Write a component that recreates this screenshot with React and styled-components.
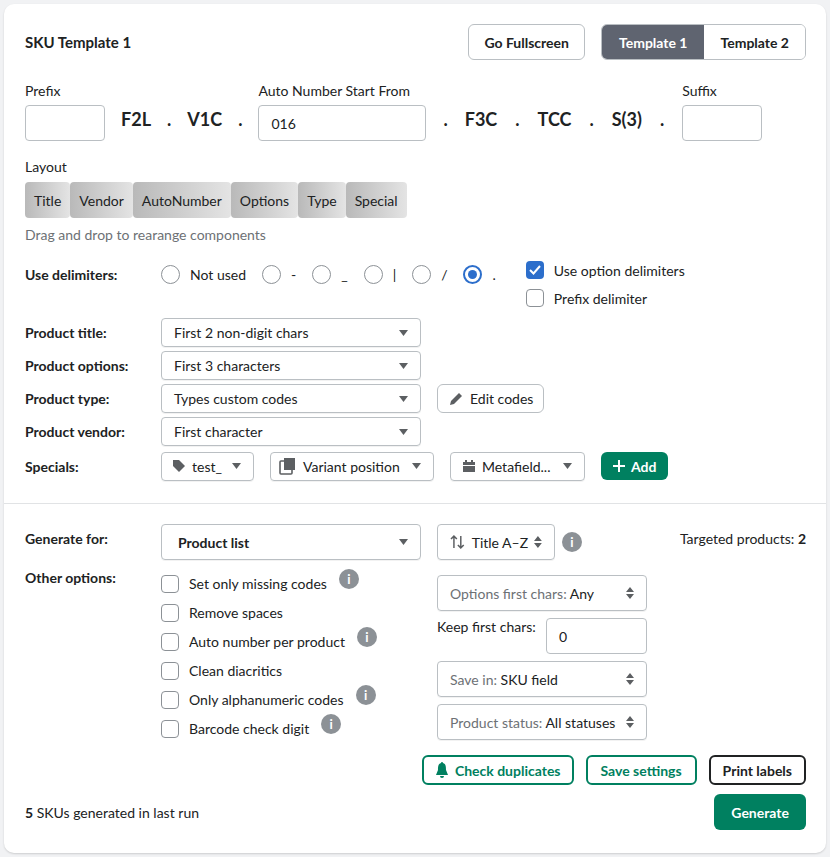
import React from "react";
import styled, { createGlobalStyle } from "styled-components";

const G = createGlobalStyle`
  body{margin:0;background:#f1f2f4;font-family:Lato,"Noto Sans",sans-serif;color:#202223;font-size:14px;}
  *{box-sizing:border-box;}
`;
const Card = styled.div`
  margin:4px;width:822px;height:849px;background:#fff;border-radius:10px;
  box-shadow:0 1px 2px rgba(0,0,0,.15);display:flex;flex-direction:column;
`;
const Top = styled.div`padding:20px 20px 0 21px;display:flex;flex-direction:column;`;
const Bottom = styled.div`border-top:1px solid #e1e3e5;padding:20px 20px 0 21px;display:flex;flex-direction:column;`;
const Header = styled.div`display:flex;align-items:center;height:36px;`;
const Title = styled.div`font-size:15px;font-weight:700;flex:1;`;
const Btn = styled.button`
  font:inherit;font-weight:700;font-size:14px;height:${p=>p.h||36}px;padding:0 ${p=>p.px||15}px;
  border-radius:6px;cursor:pointer;display:inline-flex;align-items:center;gap:6px;
  background:${p=>p.bg||"#fff"};color:${p=>p.c||"#202223"};
  border:${p=>p.b||"1px solid #babfc3"};
`;
const Seg = styled.div`display:flex;margin-left:16px;border:1px solid #babfc3;border-radius:6px;overflow:hidden;height:36px;`;
const SegItem = styled.div`
  display:flex;align-items:center;padding:0 ${p=>p.px}px;font-weight:700;
  background:${p=>p.active?"#5f6470":"#fff"};color:${p=>p.active?"#fff":"#202223"};
`;
const Tokens = styled.div`display:flex;align-items:flex-end;margin-top:22px;`;
const Field = styled.div`display:flex;flex-direction:column;gap:6px;`;
const Label = styled.div`font-size:14px;`;
const Input = styled.div`
  width:${p=>p.w}px;height:36px;border:1px solid #babfc3;border-radius:4px;
  display:flex;align-items:center;padding-left:12px;
`;
const Tok = styled.div`font-size:18px;font-weight:700;height:36px;display:flex;align-items:center;padding-bottom:9px;margin:0 ${p=>p.m||0}px;`;
const Chips = styled.div`display:flex;margin-top:7px;`;
const Chip = styled.div`
  height:36px;padding:0 9px;display:flex;align-items:center;border-radius:4px;
  background:linear-gradient(90deg,#b9b9b9,#e4e4e4);
`;
const Help = styled.div`color:#6d7175;margin-top:8px;`;
const Row = styled.div`display:flex;align-items:${p=>p.ai||"center"};margin-top:${p=>p.mt||0}px;min-height:${p=>p.h||0}px;`;
const RowLabel = styled.div`width:136px;font-weight:700;flex-shrink:0;`;
const Radio = styled.div`display:flex;align-items:center;gap:10px;margin-right:16px;`;
const Circle = styled.span`
  width:19px;height:19px;border-radius:50%;border:${p=>p.on?"2px solid #2c6ecb":"1.5px solid #8c9196"};
  display:flex;align-items:center;justify-content:center;
  &::after{content:"";width:9px;height:9px;border-radius:50%;background:${p=>p.on?"#2c6ecb":"transparent"};}
`;
const Check = styled.span`
  width:18px;height:18px;border-radius:4px;flex-shrink:0;
  border:${p=>p.on?"none":"1.5px solid #8c9196"};background:${p=>p.on?"#2c6ecb":"#fff"};
  display:flex;align-items:center;justify-content:center;
`;
const CheckRow = styled.div`display:flex;align-items:center;gap:10px;height:${p=>p.h||28}px;`;
const Select = styled.div`
  width:${p=>p.w||260}px;height:${p=>p.h||29}px;border:1px solid #babfc3;border-radius:4px;
  display:flex;align-items:center;padding:0 12px 0 ${p=>p.pl||12}px;gap:6px;font-weight:${p=>p.fw||400};
  box-shadow:0 1px 0 rgba(0,0,0,.05);color:${p=>p.c||"#202223"};flex-shrink:0;
  & > span{flex:1;white-space:nowrap;}
`;
const Info = styled.span`
  width:20px;height:20px;border-radius:50%;background:#8c9196;color:#fff;font-weight:700;
  font-size:13px;display:inline-flex;align-items:center;justify-content:center;flex-shrink:0;
`;
const Cols = styled.div`display:flex;margin-top:15px;`;
const Left = styled.div`display:flex;flex-direction:column;width:276px;margin-top:-6px;`;
const Right = styled.div`display:flex;flex-direction:column;gap:7px;`;
const Actions = styled.div`display:flex;justify-content:flex-end;gap:12px;margin-top:12px;`;
const Foot = styled.div`display:flex;align-items:center;justify-content:space-between;margin-top:9px;`;

const Caret = () => <svg width="9" height="6" viewBox="0 0 9 6"><path d="M0 0h9L4.5 6z" fill="#5c5f62"/></svg>;
const Updown = () => <svg width="8" height="12" viewBox="0 0 8 12"><path d="M4 0l4 5H0zM4 12L0 7h8z" fill="#5c5f62"/></svg>;
const Tick = () => <svg width="12" height="10" viewBox="0 0 12 10"><path d="M1 5l3.5 3.5L11 1" stroke="#fff" strokeWidth="2" fill="none"/></svg>;

const Sel = ({w,children,icon,h,fw,pl,c,ud}) => (
  <Select w={w} h={h} fw={fw} pl={pl} c={c}>{icon}<span>{children}</span>{ud?<Updown/>:<Caret/>}</Select>
);

export default function App(){
  return <>
    <G/>
    <Card>
      <Top>
        <Header>
          <Title>SKU Template 1</Title>
          <Btn>Go Fullscreen</Btn>
          <Seg><SegItem active px={17}>Template 1</SegItem><SegItem px={16}>Template 2</SegItem></Seg>
        </Header>
        <Tokens>
          <Field><Label>Prefix</Label><Input w={80}/></Field>
          <Tok m={16}>F2L</Tok><Tok>.</Tok><Tok m={16}>V1C</Tok><Tok>.</Tok>
          <Field style={{marginLeft:16}}><Label>Auto Number Start From</Label><Input w={168}>016</Input></Field>
          <Tok m={17}>.</Tok><Tok>F3C</Tok><Tok m={18}>.</Tok><Tok>TCC</Tok><Tok m={18}>.</Tok><Tok>S(3)</Tok><Tok m={18}>.</Tok>
          <Field><Label>Suffix</Label><Input w={80}/></Field>
        </Tokens>
        <Label style={{marginTop:17}}>Layout</Label>
        <Chips>{["Title","Vendor","AutoNumber","Options","Type","Special"].map(t=><Chip key={t}>{t}</Chip>)}</Chips>
        <Help>Drag and drop to rearange components</Help>
        <Row ai="flex-start" mt={22}>
          <RowLabel style={{marginTop:1}}>Use delimiters:</RowLabel>
          <Row>
            {["Not used","-","_","|","/","."].map((t,i)=><Radio key={i}><Circle on={i===5}/>{t}</Radio>)}
          </Row>
          <div style={{marginLeft:14,marginTop:-9}}>
            <CheckRow><Check on><Tick/></Check>Use option delimiters</CheckRow>
            <CheckRow><Check/>Prefix delimiter</CheckRow>
          </div>
        </Row>
        <Row mt={4} h={33}><RowLabel>Product title:</RowLabel><Sel>First 2 non-digit chars</Sel></Row>
        <Row h={33}><RowLabel>Product options:</RowLabel><Sel>First 3 characters</Sel></Row>
        <Row h={33}><RowLabel>Product type:</RowLabel><Sel>Types custom codes</Sel>
          <Btn h={29} px={10} style={{marginLeft:16,fontWeight:400}}>
            <svg width="16" height="16" viewBox="0 0 16 16"><path d="M2 14l1-4 8-8 3 3-8 8z" fill="#5c5f62"/></svg>Edit codes</Btn></Row>
        <Row h={33}><RowLabel>Product vendor:</RowLabel><Sel>First character</Sel></Row>
        <Row h={34} mt={1}><RowLabel>Specials:</RowLabel>
          <Sel w={93} pl={10} icon={<svg width="14" height="14" viewBox="0 0 14 14"><path d="M1 1h6l6 6-6 6-6-6z" fill="#5c5f62"/></svg>}>test_</Sel>
          <div style={{width:16}}/>
          <Sel w={164} pl={8} icon={<svg width="18" height="18" viewBox="0 0 18 18"><rect x="1" y="4" width="12" height="13" rx="1" fill="none" stroke="#5c5f62" strokeWidth="1.6"/><path d="M5 1h11v12H5z" fill="#5c5f62"/></svg>}>Variant position</Sel>
          <div style={{width:16}}/>
          <Sel w={135} pl={11} icon={<svg width="14" height="14" viewBox="0 0 14 14"><path d="M1 3h12v10H1zM3 1h2v2H3zM9 1h2v2H9z" fill="#5c5f62"/><rect x="1" y="6" width="12" height="1" fill="#fff"/></svg>}>Metafield...</Sel>
          <Btn h={28} px={12} bg="#008060" c="#fff" b="none" style={{marginLeft:16}}>
            <svg width="12" height="12" viewBox="0 0 12 12"><path d="M6 0v12M0 6h12" stroke="#fff" strokeWidth="2"/></svg>Add</Btn>
        </Row>
        <div style={{height:20}}/>
      </Top>
      <Bottom>
        <Row>
          <RowLabel style={{alignSelf:"flex-start",marginTop:6}}>Generate for:</RowLabel>
          <Sel w={260} h={36} fw={700} pl={16}>Product list</Sel>
          <Select w={118} h={36} style={{marginLeft:16}}>
            <svg width="16" height="16" viewBox="0 0 16 16"><path d="M4 14V2M1 5l3-3 3 3M11 2v12M8 11l3 3 3-3" stroke="#5c5f62" strokeWidth="1.5" fill="none"/></svg>
            <span>Title A–Z</span><Updown/></Select>
          <Info style={{marginLeft:7}}>i</Info>
          <div style={{flex:1,textAlign:"right",alignSelf:"flex-start",marginTop:6}}>Targeted products: <b>2</b></div>
        </Row>
        <Cols>
          <RowLabel style={{marginTop:-6}}>Other options:</RowLabel>
          <Left>
            {[["Set only missing codes",1],["Remove spaces"],["Auto number per product",1],["Clean diacritics"],["Only alphanumeric codes",1],["Barcode check digit",1]].map(([t,i])=>
              <CheckRow key={t} h={29}><Check/>{t}{i&&<Info style={{marginTop:-10,marginLeft:2}}>i</Info>}</CheckRow>)}
          </Left>
          <Right>
            <Select w={210} h={36} c="#6d7175"><span>Options first chars: <b style={{fontWeight:400,color:"#202223"}}>Any</b></span><Updown/></Select>
            <Row><span style={{flex:1,alignSelf:"flex-start"}}>Keep first chars:</span><Input w={101}>0</Input></Row>
            <Select w={210} h={36} c="#6d7175"><span>Save in: <b style={{fontWeight:400,color:"#202223"}}>SKU field</b></span><Updown/></Select>
            <Select w={210} h={36} c="#6d7175"><span>Product status: <b style={{fontWeight:400,color:"#202223"}}>All statuses</b></span><Updown/></Select>
          </Right>
        </Cols>
        <Actions>
          <Btn h={30} px={11} c="#008060" b="2px solid #008060">
            <svg width="14" height="18" viewBox="0 0 14 18"><path d="M7 1a1 1 0 011 1c3 1 3 4 3 7l2 5H1l2-5c0-3 0-6 3-7a1 1 0 011-1zM5 15h4a2 2 0 01-4 0z" fill="#008060"/></svg>
            Check duplicates</Btn>
          <Btn h={30} px={13} c="#008060" b="2px solid #008060">Save settings</Btn>
          <Btn h={30} px={12} b="2px solid #202223">Print labels</Btn>
        </Actions>
        <Foot><div><b>5</b> SKUs generated in last run</div>
          <Btn px={17} bg="#008060" c="#fff" b="none">Generate</Btn></Foot>
      </Bottom>
    </Card>
  </>;
}
